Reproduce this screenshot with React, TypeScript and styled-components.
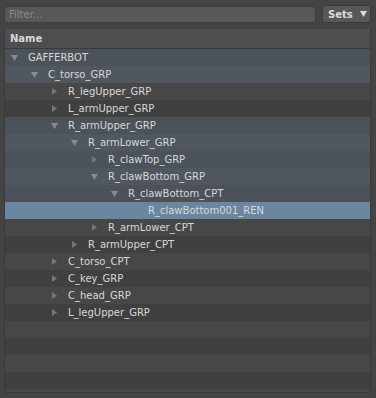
import React from 'react';
import styled, { createGlobalStyle } from 'styled-components';

const GlobalStyle = createGlobalStyle`
  html, body {
    margin: 0;
    padding: 0;
    background: #444444;
  }
  body {
    font-family: 'DejaVu Sans', 'Liberation Sans', sans-serif;
    font-size: 10px;
    color: #d8d8d8;
  }
`;

const Page = styled.div`
  width: 376px;
  height: 398px;
  box-sizing: border-box;
  padding: 5px 5px 5px 4px;
  display: flex;
  flex-direction: column;
  gap: 6px;
  background: #444444;
`;

const Toolbar = styled.div`
  display: flex;
  align-items: center;
  gap: 6px;
  height: 18px;
`;

const FilterInput = styled.input`
  flex: 1;
  height: 17px;
  box-sizing: border-box;
  margin: 0;
  padding: 0 4px;
  background: #585858;
  border: 1px solid #3e3e3e;
  border-radius: 3px;
  color: #d8d8d8;
  font-family: 'DejaVu Sans', sans-serif;
  font-size: 10px;
  outline: none;

  &::placeholder {
    color: #8c8c8c;
  }
`;

const SetsButton = styled.button`
  width: 49px;
  height: 18px;
  box-sizing: border-box;
  margin: 0;
  padding: 0 0 0 5px;
  display: flex;
  align-items: center;
  gap: 7px;
  background: #585858;
  border: 1px solid #3a3a3a;
  border-radius: 3px;
  color: #dcdcdc;
  font-family: 'DejaVu Sans', sans-serif;
  font-size: 10px;
  font-weight: bold;
`;

const Panel = styled.div`
  flex: 1;
  display: flex;
  flex-direction: column;
  background: #474747;
  border: 1px solid #3a3a3a;
  border-top: none;
  overflow: hidden;
`;

const Header = styled.div`
  height: 19px;
  display: flex;
  align-items: center;
  padding-left: 5px;
  background: #4e4e4e;
  border-bottom: 1px solid #3a3a3a;
  font-weight: bold;
  color: #d8d8d8;
`;

const Row = styled.div<{ $even: boolean; $tint: boolean; $selected: boolean }>`
  height: 17px;
  flex-shrink: 0;
  display: flex;
  align-items: center;
  white-space: nowrap;
  color: #d8d8d8;
  background: ${p =>
    p.$selected
      ? '#6a87a2'
      : p.$tint
      ? p.$even ? '#4b5259' : '#50575e'
      : p.$even ? '#474747' : '#404040'};
`;

const Arrow = styled.span<{ $depth: number }>`
  width: 17px;
  flex-shrink: 0;
  margin-left: ${p => 6 + p.$depth * 20}px;
  display: flex;
  align-items: center;
`;

const Label = styled.span``;

type Node = {
  name: string;
  depth: number;
  leaf?: boolean;
  open?: boolean;
  tint?: boolean;
  selected?: boolean;
};

const rows: Node[] = [
  { name: 'GAFFERBOT', depth: 0, open: true, tint: true },
  { name: 'C_torso_GRP', depth: 1, open: true, tint: true },
  { name: 'R_legUpper_GRP', depth: 2 },
  { name: 'L_armUpper_GRP', depth: 2 },
  { name: 'R_armUpper_GRP', depth: 2, open: true, tint: true },
  { name: 'R_armLower_GRP', depth: 3, open: true, tint: true },
  { name: 'R_clawTop_GRP', depth: 4, tint: true },
  { name: 'R_clawBottom_GRP', depth: 4, open: true, tint: true },
  { name: 'R_clawBottom_CPT', depth: 5, open: true, tint: true },
  { name: 'R_clawBottom001_REN', depth: 6, leaf: true, selected: true },
  { name: 'R_armLower_CPT', depth: 4 },
  { name: 'R_armUpper_CPT', depth: 3 },
  { name: 'C_torso_CPT', depth: 2 },
  { name: 'C_key_GRP', depth: 2 },
  { name: 'C_head_GRP', depth: 2 },
  { name: 'L_legUpper_GRP', depth: 2 },
];

const EMPTY_ROWS = 4;

const DownTri = ({ color = '#8a8a8a' }: { color?: string }) => (
  <svg width="7" height="6" viewBox="0 0 7 6">
    <path d="M0 0 L7 0 L3.5 6 Z" fill={color} />
  </svg>
);

const RightTri = () => (
  <svg width="5" height="7" viewBox="0 0 5 7" style={{ marginLeft: 1 }}>
    <path d="M0 0 L5 3.5 L0 7 Z" fill="#767676" />
  </svg>
);

const App: React.FC = () => {
  return (
    <Page>
      <GlobalStyle />
      <Toolbar>
        <FilterInput placeholder="Filter..." />
        <SetsButton>
          Sets
          <DownTri color="#dcdcdc" />
        </SetsButton>
      </Toolbar>
      <Panel>
        <Header>Name</Header>
        {rows.map((r, i) => (
          <Row key={r.name} $even={i % 2 === 0} $tint={!!r.tint} $selected={!!r.selected}>
            <Arrow $depth={r.depth}>
              {r.leaf ? null : r.open ? <DownTri /> : <RightTri />}
            </Arrow>
            <Label>{r.name}</Label>
          </Row>
        ))}
        {Array.from({ length: EMPTY_ROWS }).map((_, i) => (
          <Row key={'empty' + i} $even={(rows.length + i) % 2 === 0} $tint={false} $selected={false} />
        ))}
      </Panel>
    </Page>
  );
};

export default App;
